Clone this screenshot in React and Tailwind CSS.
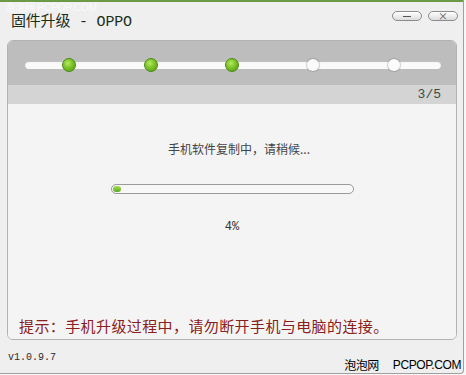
const cjk = { fontFamily: '"Noto Sans CJK SC", "Liberation Sans", sans-serif' };
const mono = { fontFamily: '"Liberation Mono", "Noto Sans CJK SC", monospace' };
const arial = { fontFamily: '"Liberation Sans", sans-serif' };

const steps = [
  { left: 44, done: true },
  { left: 126, done: true },
  { left: 207, done: true },
  { left: 288, done: false },
  { left: 369, done: false },
];

const WinButton = ({ children }) => (
  <div className="w-[30px] h-[10px] rounded-full border border-[#8c8c8c] bg-gradient-to-b from-[#ffffff] to-[#dcdcdc] flex items-center justify-center">
    {children}
  </div>
);

const Step = ({ left, done }) =>
  done ? (
    <div
      className="absolute top-[-3px] w-[14px] h-[14px] -ml-[7px] rounded-full border border-[#4a8a12] bg-[radial-gradient(circle_at_40%_35%,#b5ea62_0%,#7cc227_45%,#4f9a12_100%)]"
      style={{ left }}
    />
  ) : (
    <div
      className="absolute top-[-2px] w-[12px] h-[12px] -ml-[6px] rounded-full bg-[#fbfbfb] shadow-[0_0_1px_1px_rgba(120,120,120,0.35)]"
      style={{ left }}
    />
  );

export default function App() {
  return (
    <div className="w-[466px] h-[375px] bg-[#f7f7f7] relative overflow-hidden" style={cjk}>
      <div className="w-[464px] h-[374px] bg-[#efefef] border-r border-b border-[#a0a0a0] rounded-br-[4px] flex flex-col">
        <div className="h-[2px] bg-[#6c9a44]" />
        <div className="h-[38px] flex items-start justify-between pl-[11px] pr-[5px]">
          <div className="mt-[13px] text-[15px] leading-[15px] text-[#1a2e1a] tracking-[-0.2px]" style={mono}>
            固件升级 - OPPO
          </div>
          <div className="mt-[9px] flex gap-[6px]">
            <WinButton>
              <div className="w-[8px] h-[1px] bg-[#555]" />
            </WinButton>
            <WinButton>
              <span className="text-[10px] leading-[10px] text-[#555]">×</span>
            </WinButton>
          </div>
        </div>

        <div className="ml-[7px] w-[450px] h-[300px] rounded-[6px] border border-[#b3b3b3] overflow-hidden flex flex-col">
          <div className="h-[44px] bg-[#bdbdbd] pt-[20px] pl-[17px] pr-[15px]">
            <div className="relative h-[8px] rounded-full bg-[#fafafa] shadow-[inset_0_1px_1px_rgba(0,0,0,0.25)]">
              {steps.map((s, i) => (
                <Step key={i} {...s} />
              ))}
            </div>
          </div>
          <div className="h-[19px] bg-[#d4d4d4] flex items-center justify-end pr-[15px] text-[13px] text-[#3c4c3c]" style={mono}>
            3/5
          </div>
          <div className="flex-1 bg-[#f4f4f4] flex flex-col items-center">
            <div className="mt-[38px] ml-[14px] text-[12px] leading-[14px] text-[#444]">手机软件复制中，请稍候...</div>
            <div className="mt-[28px] w-[243px] h-[10px] rounded-full border border-[#9a9a9a] bg-[#f7f7f7] p-[1px]">
              <div className="w-[8px] h-full rounded-full bg-gradient-to-b from-[#a6e05a] to-[#5ea81c]" />
            </div>
            <div className="mt-[26px] text-[12px] leading-[14px] text-[#333]" style={mono}>
              4%
            </div>
            <div className="mt-auto mb-[3px] self-start pl-[11px] text-[15px] leading-[20px] text-[#882020] tracking-[0.4px]">
              提示：手机升级过程中，请勿断开手机与电脑的连接。
            </div>
          </div>
        </div>

        <div className="flex-1 flex justify-between pl-[8px] pr-[2px]">
          <div className="mt-[12px] text-[10px] leading-[12px] text-[#2a2a2a]" style={mono}>
            v1.0.9.7
          </div>
          <div className="mt-[17px] flex items-center text-[12px] leading-[14px] text-black">
            <span className="tracking-[-0.5px]">泡泡网</span>
            <span className="ml-[14px] tracking-[-0.4px]" style={arial}>PCPOP.COM</span>
          </div>
        </div>
      </div>

      <div className="absolute top-[1px] left-[5px] text-[10px] leading-[11px] text-white/70">
        泡泡网 <span style={arial}>PCPOP.COM</span>
      </div>
    </div>
  );
}
